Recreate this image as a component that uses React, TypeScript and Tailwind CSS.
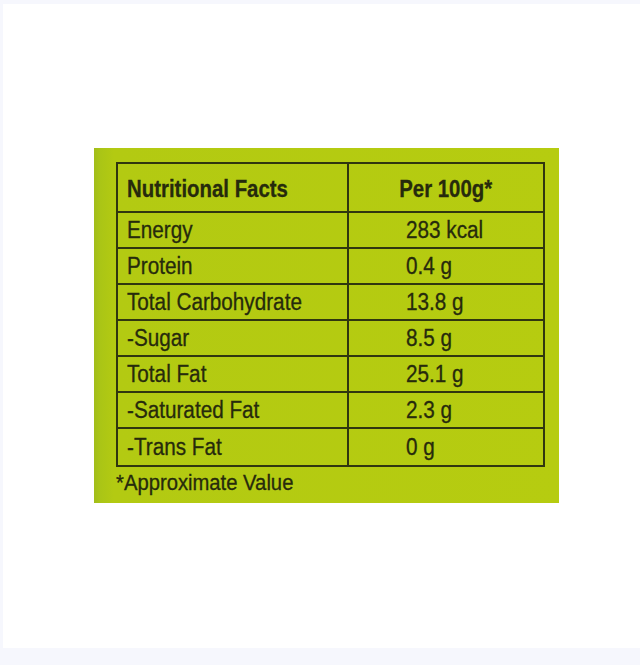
const rows = [
  { name: "Energy", value: "283 kcal" },
  { name: "Protein", value: "0.4 g" },
  { name: "Total Carbohydrate", value: "13.8 g" },
  { name: "-Sugar", value: "8.5 g" },
  { name: "Total Fat", value: "25.1 g" },
  { name: "-Saturated Fat", value: "2.3 g" },
  { name: "-Trans Fat", value: "0 g" },
];

export default function App() {
  return (
    <div className="h-[665px] w-[640px] bg-[#f6f7fd] pl-[3px] pt-[4px] pb-[17px] font-['Liberation_Sans',Arial,sans-serif]">
      <div className="h-[644px] w-full bg-white pl-[91px] pt-[144px]">
        <div className="w-[465px] h-[355px] bg-[linear-gradient(90deg,#a2bd1a_0px,#aac516_6px,#b3ca12_20px,#b6cc10_100%)] pl-[22px] pr-[14px] pt-[14px] text-[#262a0c] [-webkit-text-stroke:0.3px_#262a0c]">
          <div className="border-2 border-[#30360f]">
            <div className="flex h-[49px] border-b-2 border-[#30360f]">
              <div className="w-[231px] border-r-2 border-[#30360f] pl-[9px] flex items-center pt-[3px] text-[24px] font-bold">
                <span className="inline-block origin-left scale-x-[0.85] whitespace-nowrap">Nutritional Facts</span>
              </div>
              <div className="flex-1 flex items-center justify-center pt-[3px] text-[24px] font-bold">
                <span className="inline-block origin-center scale-x-[0.85] whitespace-nowrap">Per 100g*</span>
              </div>
            </div>
            {rows.map((r, i) => (
              <div
                key={r.name}
                className={`flex h-[36px] ${i < rows.length - 1 ? "border-b-2 border-[#30360f]" : ""}`}
              >
                <div className="w-[231px] border-r-2 border-[#30360f] pl-[9px] flex items-center text-[23px]">
                  <span className="inline-block origin-left scale-x-[0.9] whitespace-nowrap">{r.name}</span>
                </div>
                <div className="flex-1 pl-[57px] flex items-center text-[23px]">
                  <span className="inline-block origin-left scale-x-[0.9] whitespace-nowrap">{r.value}</span>
                </div>
              </div>
            ))}
          </div>
          <div className="pt-[2px] text-[22px] leading-[27px]">
            <span className="inline-block origin-left scale-x-[0.92] whitespace-nowrap">*Approximate Value</span>
          </div>
        </div>
      </div>
    </div>
  );
}
